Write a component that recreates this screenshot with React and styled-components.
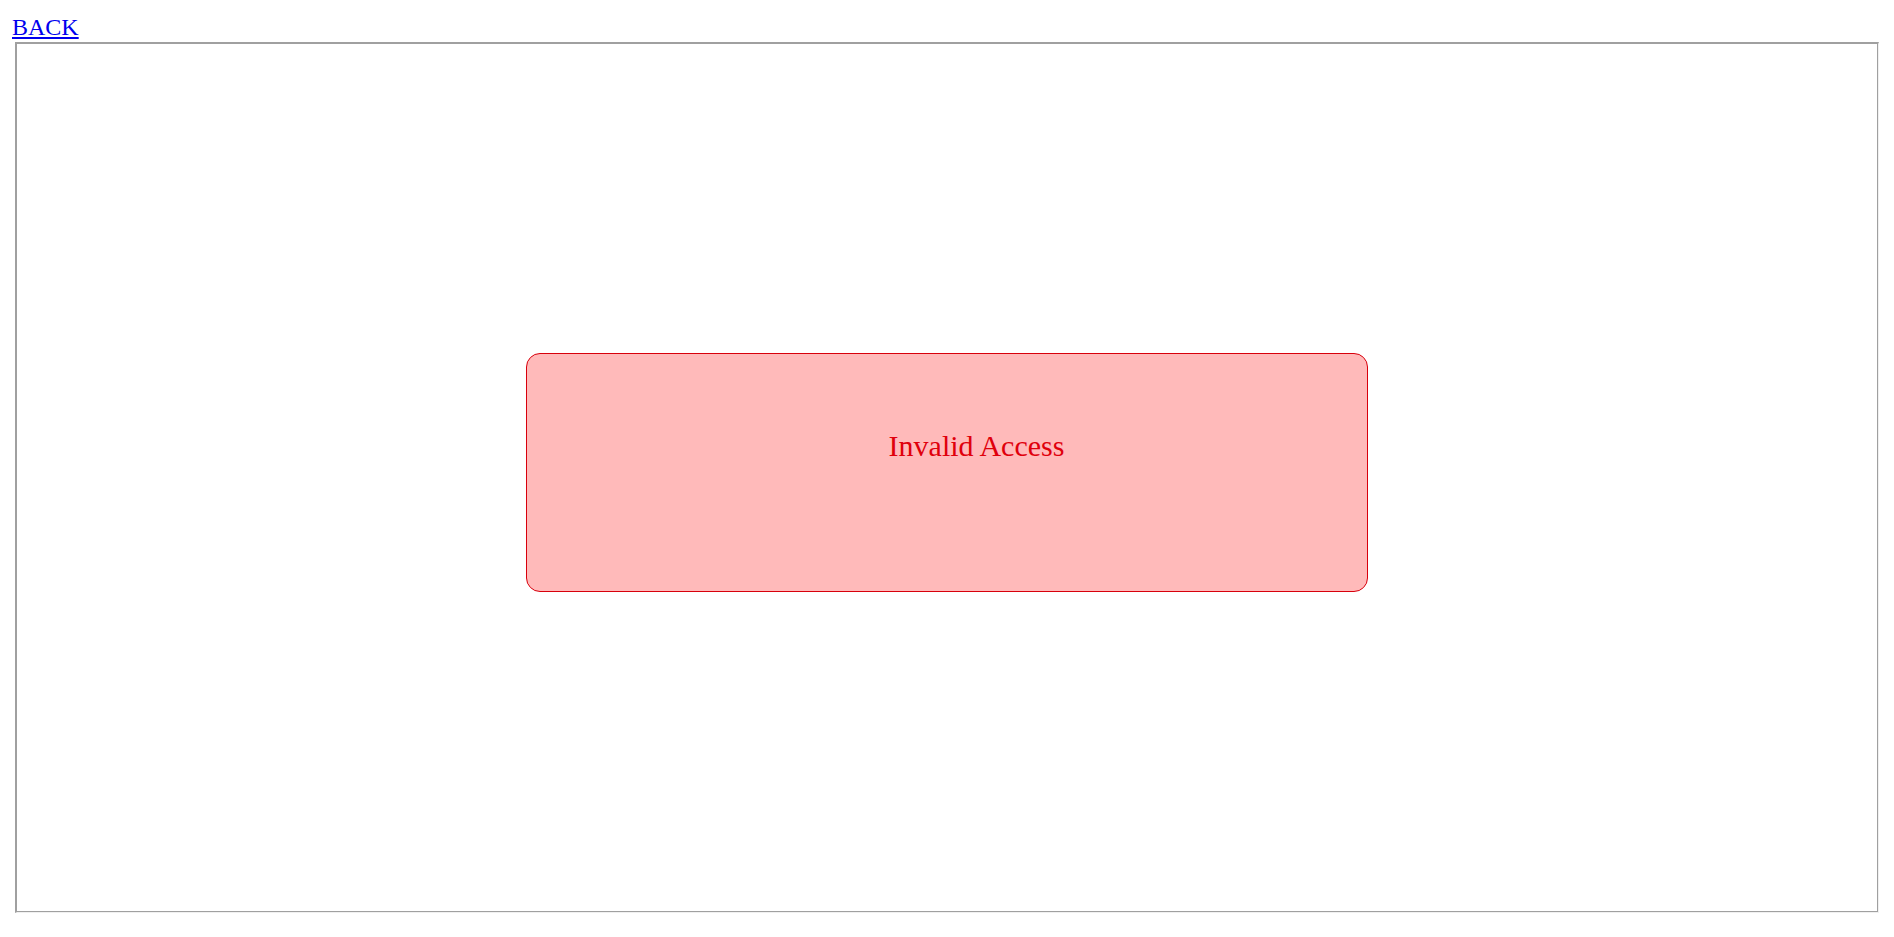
import styled, { createGlobalStyle } from 'styled-components'

const GlobalStyle = createGlobalStyle`
    body {
        margin: 0;
        background: #ffffff;
        font-family: "Liberation Serif", "Times New Roman", serif;
    }
`

const Page = styled.div`
    padding: 13px 15px 0 12px;
`
const BackLink = styled.a`
    display: inline-block;
    font-size: 24px;
    line-height: 28px;
    color: #0000ee;
    text-decoration: underline;
    cursor: pointer;
`
const Frame = styled.div`
    box-sizing: border-box;
    height: 871px;
    margin: 1px 0 0 3px;
    border-style: solid;
    border-width: 2px 1px 1px 2px;
    border-color: #a0a0a0 #f0f0f0 #f0f0f0 #a0a0a0;
    box-shadow: inset -1px -1px 0 #a0a0a0;
    display: flex;
    align-items: center;
    justify-content: center;
`
const ErrorBox = styled.div`
    box-sizing: border-box;
    width: 842px;
    height: 239px;
    margin: 0 1px 11px 0;
    padding: 75px 10px 0 69px;
    border: 1px solid #d8000c;
    border-radius: 14px;
    background-color: #ffbaba;
    color: #e0000c;
    font-size: 30px;
    line-height: 34px;
    text-align: center;
`

export default function App() {
    return (
        <Page>
            <GlobalStyle />
            <BackLink href="#">BACK</BackLink>
            <Frame>
                <ErrorBox>Invalid Access</ErrorBox>
            </Frame>
        </Page>
    )
}
